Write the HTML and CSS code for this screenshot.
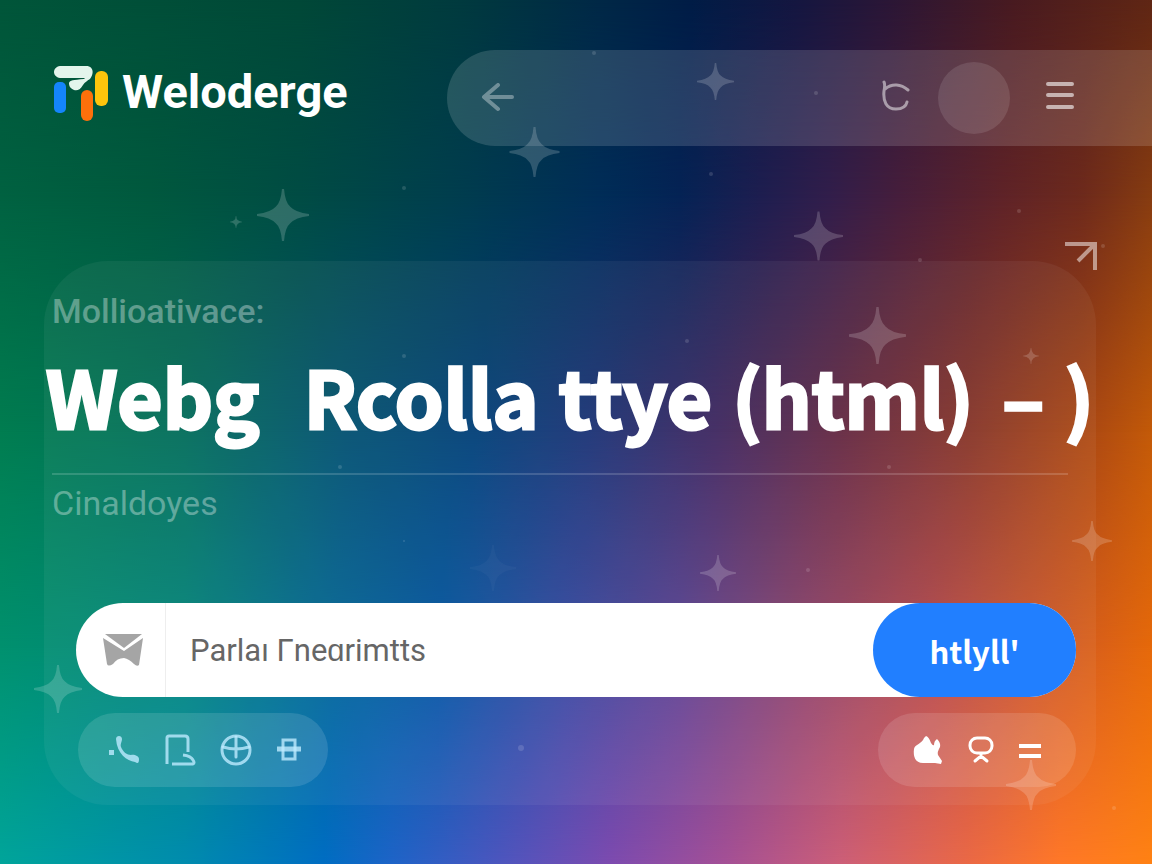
FILE: index.html
```html
<!DOCTYPE html>
<html lang="en">
<head>
    <meta charset="UTF-8">
    <meta name="viewport" content="width=device-width, initial-scale=1.0">
    <title>Weloderge</title>
    <link rel="stylesheet" href="styles.css">
</head>
<body>
    <!-- Background colour bands, bottom one first -->
    <div class="backdrop" aria-hidden="true">
        <div class="band band-floor"></div>
        <div class="band band-low"></div>
        <div class="band band-middle"></div>
        <div class="band band-high"></div>
        <div class="band band-top"></div>
    </div>

    <header class="header">
        <a class="brand" href="#">
            <svg class="brand-logo" viewBox="0 0 54 56" aria-hidden="true">
                <rect x="0" y="16" width="12" height="31" rx="5" fill="#1485fb"/>
                <rect x="41" y="5" width="13" height="35" rx="6" fill="#fdc50c"/>
                <rect x="27" y="24" width="12" height="31" rx="6" fill="#fd700b"/>
                <path d="M6 0H32C40 0 40 8 36 13C33 15 31 16 29 19C26 24 23 25 20 24C16 22 15 20 15 17C16 14 19 14 30 13L31 12H6C-2 11-2 1 6 0Z" fill="#e3f5ec"/>
            </svg>
            <span>Weloderge</span>
        </a>
        <nav class="toolbar">
            <button class="icon-button back" aria-label="Back">
                <svg width="34" height="30" viewBox="0 0 34 30" fill="none" stroke="currentColor" stroke-width="4" stroke-linecap="round" stroke-linejoin="round"><path d="M17 2L3 14L17 26M4 14H31"/></svg>
            </button>
            <button class="icon-button refresh" aria-label="Refresh">
                <svg width="28" height="36" viewBox="0 0 28 36" fill="none" stroke="currentColor" stroke-width="3" stroke-linecap="round"><path d="M2 2C3 4 3 6 2 11C1 21 4 29 14 29C20 29 24 27 25 22M3 9C10 3 19 4 26 10"/></svg>
            </button>
            <button class="icon-button avatar" aria-label="Account"></button>
            <button class="icon-button" aria-label="Menu">
                <svg width="28" height="34" viewBox="0 0 28 34" stroke="currentColor" stroke-width="4" stroke-linecap="round"><path d="M2 3H26M2 14H26M2 26H26"/></svg>
            </button>
        </nav>
    </header>

    <main class="panel">
        <a class="open-link" href="#" aria-label="Open">
            <svg width="34" height="30" viewBox="0 0 34 30" fill="none" stroke="currentColor" stroke-width="4"><path d="M1 3H31V29M30 4L14 20"/></svg>
        </a>
        <p class="note note-strong">Mollioativace:</p>
        <h1 class="title">
            <span class="wide">Webg</span>
            <span>Rcolla</span>
            <span>ttye</span>
            <span class="code">(html)</span>
            <span>–</span>
            <span>)</span>
        </h1>
        <p class="note subtitle">Cinaldoyes</p>

        <form class="search">
            <label class="search-icon" for="query" aria-label="Search">
                <svg width="42" height="34" viewBox="0 0 42 34" fill="#a5a5a5"><path d="M3 1H40L22 15Z"/><path d="M1 5L22 18L41 5L37 32Q35 34 32 31Q27 26 22 25Q15 25 11 31Q6 34 5 31Z"/></svg>
            </label>
            <input class="search-input" id="query" type="text" placeholder="Parlaı Γneɑrimtts">
            <button class="search-button" type="submit">htlyll'</button>
        </form>

        <div class="actions">
            <div class="chip chip-left">
                <button class="icon-button" aria-label="Call">
                    <svg width="32" height="32" viewBox="0 0 32 32" fill="currentColor"><rect x="1" y="16" width="5" height="5"/><path d="M8 5C8 1 14 1 14 5C14 8 12 10 13 13C15 18 19 21 23 21C26 20 31 22 31 25C31 29 30 30 27 28C19 27 9 20 8 5Z"/></svg>
                </button>
                <button class="icon-button" aria-label="Document">
                    <svg width="32" height="32" viewBox="0 0 32 32" fill="none" stroke="currentColor" stroke-width="3" stroke-linejoin="round"><path d="M3 30V4Q3 2 5 2H21Q24 2 24 5V18M8 30H29Q31 29 29 26Q27 22 19 21"/></svg>
                </button>
                <button class="icon-button" aria-label="Browse">
                    <svg width="32" height="32" viewBox="0 0 32 32" fill="none" stroke="currentColor" stroke-width="3" stroke-linecap="round"><circle cx="16" cy="16" r="14"/><path d="M16 3V23M3 13Q16 17 29 13"/></svg>
                </button>
                <button class="icon-button" aria-label="Align">
                    <svg width="26" height="26" viewBox="0 0 26 26" fill="none" stroke="currentColor" stroke-width="3"><rect x="7" y="3" width="12" height="19"/><path d="M1 12H25" stroke-width="5"/></svg>
                </button>
            </div>
            <div class="chip chip-right">
                <button class="icon-button" aria-label="Trending">
                    <svg width="30" height="30" viewBox="0 0 30 30" fill="currentColor"><path d="M13 1Q16 2 18 8Q20 11 21 10Q21 6 24 4Q28 8 27 12Q24 17 25 20L29 26L28 29L22 28H10C2 28 0 21 1 14C2 9 9 9 11 3Z"/></svg>
                </button>
                <button class="icon-button" aria-label="Award">
                    <svg width="28" height="30" viewBox="0 0 28 30" fill="none" stroke="currentColor" stroke-width="3" stroke-linecap="round"><rect x="3" y="3" width="22" height="15" rx="7"/><path d="M14 19V21M8 26L14 21L20 26"/></svg>
                </button>
                <button class="icon-button" aria-label="More">
                    <svg width="22" height="30" viewBox="0 0 22 30" stroke="currentColor" stroke-width="4"><path d="M0 11H22M0 21H22"/></svg>
                </button>
            </div>
        </div>
    </main>

    <svg class="stars" viewBox="0 0 1152 864" preserveAspectRatio="none" aria-hidden="true">
        <defs>
            <symbol id="star" viewBox="-50 -50 100 100">
                <path d="M-2-50H2Q4-24 14-16Q24-5 50-2V2Q24 5 14 16Q4 24 2 50H-2Q-4 24-14 16Q-24 5-50 2V-2Q-24-5-14-16Q-4-24-2-50Z"/>
            </symbol>
        </defs>
        <use href="#star" x="509" y="127" width="51" height="50"/>
        <use href="#star" x="697" y="63" width="37" height="37"/>
        <use href="#star" x="257" y="189" width="52" height="52"/>
        <use href="#star" x="794" y="211" width="49" height="50"/>
        <use href="#star" x="849" y="307" width="57" height="57"/>
        <use href="#star" x="1023" y="348" width="16" height="16"/>
        <use href="#star" x="1072" y="521" width="40" height="40"/>
        <use href="#star" x="700" y="555" width="36" height="36"/>
        <use href="#star" x="34" y="665" width="48" height="48"/>
        <use href="#star" x="1006" y="760" width="50" height="50"/>
        <use href="#star" x="230" y="216" width="12" height="12"/>
        <use class="faint" href="#star" x="470" y="545" width="46" height="46"/>
        <g class="dots">
            <circle cx="521" cy="748" r="3"/>
            <circle cx="711" cy="174" r="2"/>
            <circle cx="816" cy="93" r="2"/>
            <circle cx="920" cy="260" r="2"/>
            <circle cx="1019" cy="211" r="2"/>
            <circle cx="1103" cy="246" r="2"/>
            <circle cx="404" cy="188" r="2"/>
            <circle cx="404" cy="356" r="2"/>
            <circle cx="340" cy="467" r="2"/>
            <circle cx="889" cy="467" r="2"/>
            <circle cx="687" cy="341" r="2"/>
            <circle cx="594" cy="53" r="2"/>
            <circle cx="404" cy="541" r="1"/>
            <circle cx="808" cy="570" r="2"/>
            <circle cx="1114" cy="808" r="2"/>
        </g>
    </svg>
</body>
</html>
```
FILE: styles.css
```css
* {
    box-sizing: border-box;
}
body {
    position: relative;
    min-height: 100vh;
    margin: 0;
    padding: 50px 0 59px;
    overflow-x: hidden;
    background-color: #004a58;
    color: #ffffff;
    font-family: Roboto, "Liberation Sans", sans-serif;
}

/* Background */
.backdrop, .band, .stars {
    position: absolute;
    top: 0;
    left: 0;
    width: 100%;
    height: 100%;
}
.backdrop {
    z-index: -1;
}
.band-floor {
    background: linear-gradient(90deg, #00a59b 0%, #008caf 16%, #006ec3 28%, #1e64c8 34%, #5055be 44%, #7d4bb0 53%, #a55096 63%, #cd5f78 73%, #eb6946 84%, #ff7828 92%, #ff8214 100%);
}
.band-low {
    background: linear-gradient(90deg, #00916e 0%, #00847a 16%, #006496 29%, #0055a0 38%, #3448a0 49%, #5a4191 59%, #8c4169 70%, #b4484b 81%, #d25a23 92%, #e6690a 100%);
    mask-image: linear-gradient(#000 75%, transparent 100%);
}
.band-middle {
    background: linear-gradient(90deg, #007d50 0%, #006c5a 16%, #005070 30%, #004078 41%, #1a3275 51%, #3e265f 62%, #642841 73%, #863428 84%, #ae4a12 95%, #c35a08 100%);
    mask-image: linear-gradient(#000 50%, transparent 75%);
}
.band-high {
    background: linear-gradient(90deg, #006241 0%, #00593e 13%, #004c44 26%, #003e4e 39%, #002d58 52%, #052355 59%, #1e1e50 66%, #321e4b 72%, #461e3c 78%, #5f2328 87%, #6e2a1c 94%, #873c10 100%);
    mask-image: linear-gradient(#000 23%, transparent 50%);
}
.band-top {
    background: linear-gradient(90deg, #005539 0%, #004837 26%, #003a3e 40%, #002846 52%, #001c46 60%, #141640 69%, #2a1636 77%, #481a20 88%, #5f2614 100%);
    mask-image: linear-gradient(#000 0%, transparent 23%);
}
.stars {
    fill: rgba(255, 255, 255, 0.18);
    pointer-events: none;
}
.faint {
    fill: rgba(255, 255, 255, 0.03);
}
.dots {
    fill: rgba(255, 255, 255, 0.14);
}

/* Header */
.header {
    display: flex;
    align-items: center;
    justify-content: space-between;
    height: 96px;
    padding-left: 54px;
}
.brand {
    display: flex;
    align-items: center;
    gap: 14px;
    margin-top: -12px;
    color: #ffffff;
    font-size: 47px;
    font-weight: bold;
    line-height: 56px;
    text-decoration: none;
}
.brand-logo {
    width: 54px;
    height: 56px;
    margin-top: 4px;
}
.toolbar {
    display: flex;
    flex-shrink: 0;
    align-items: center;
    gap: 28px;
    width: 64.2%;
    height: 96px;
    padding: 0 78px 0 34px;
    border-radius: 48px 0 0 48px;
    background-color: rgba(255, 255, 255, 0.14);
    color: rgba(255, 255, 255, 0.6);
}
.icon-button {
    display: flex;
    padding: 0;
    border: none;
    background: none;
    color: inherit;
    cursor: pointer;
}
.back {
    margin-right: auto;
    color: rgba(255, 255, 255, 0.35);
}
.refresh {
    color: rgba(255, 255, 255, 0.5);
}
.avatar {
    width: 72px;
    height: 72px;
    margin-right: 8px;
    border-radius: 50%;
    background-color: rgba(255, 255, 255, 0.11);
}

/* Main panel */
.panel {
    position: relative;
    margin: 115px 56px 0 44px;
    padding: 30px 0 18px;
    border-radius: 64px;
    background-color: rgba(255, 255, 255, 0.05);
}
.open-link {
    position: absolute;
    top: -20px;
    right: -2px;
    color: rgba(255, 255, 255, 0.5);
}
.note {
    margin: 0 0 0 8px;
    color: rgba(255, 255, 255, 0.35);
    font-size: 34px;
    line-height: 40px;
}
.note-strong {
    font-weight: 500;
}
.title {
    display: flex;
    justify-content: space-between;
    margin: 14px 2px 28px;
    font-family: "Noto Sans CJK SC", sans-serif;
    font-size: 78px;
    font-weight: bold;
    line-height: 100px;
    white-space: nowrap;
    -webkit-text-stroke: 3px #ffffff;
}
.wide {
    margin-right: 24px;
}
.code {
    margin-right: 8px;
}
.subtitle {
    margin-right: 28px;
    padding-top: 8px;
    border-top: 2px solid rgba(255, 255, 255, 0.16);
}

/* Search bar */
.search {
    display: flex;
    height: 94px;
    margin: 80px 20px 16px 32px;
    border-radius: 47px;
    background-color: #ffffff;
}
.search-icon {
    display: flex;
    align-items: center;
    justify-content: center;
    width: 90px;
    padding-left: 4px;
    border-right: 1px solid #eeeeee;
}
.search-input {
    flex: 1;
    min-width: 0;
    padding: 0 24px;
    border: none;
    background: none;
    color: #666666;
    font-family: inherit;
    font-size: 31px;
}
.search-input::placeholder {
    color: #666666;
}
.search-button {
    width: 203px;
    border: none;
    border-radius: 47px;
    background-color: #217fff;
    color: #ffffff;
    font-family: "Noto Sans CJK SC", sans-serif;
    font-size: 31px;
    font-weight: bold;
    cursor: pointer;
}

/* Bottom row */
.actions {
    display: flex;
    justify-content: space-between;
    margin: 0 20px 0 34px;
}
.chip {
    display: flex;
    align-items: center;
    gap: 24px;
    height: 74px;
    border-radius: 37px;
    background-color: rgba(255, 255, 255, 0.12);
}
.chip-left {
    padding: 0 26px 0 30px;
    color: rgba(190, 235, 255, 0.8);
}
.chip-right {
    padding: 0 35px;
    color: #ffffff;
}
```
